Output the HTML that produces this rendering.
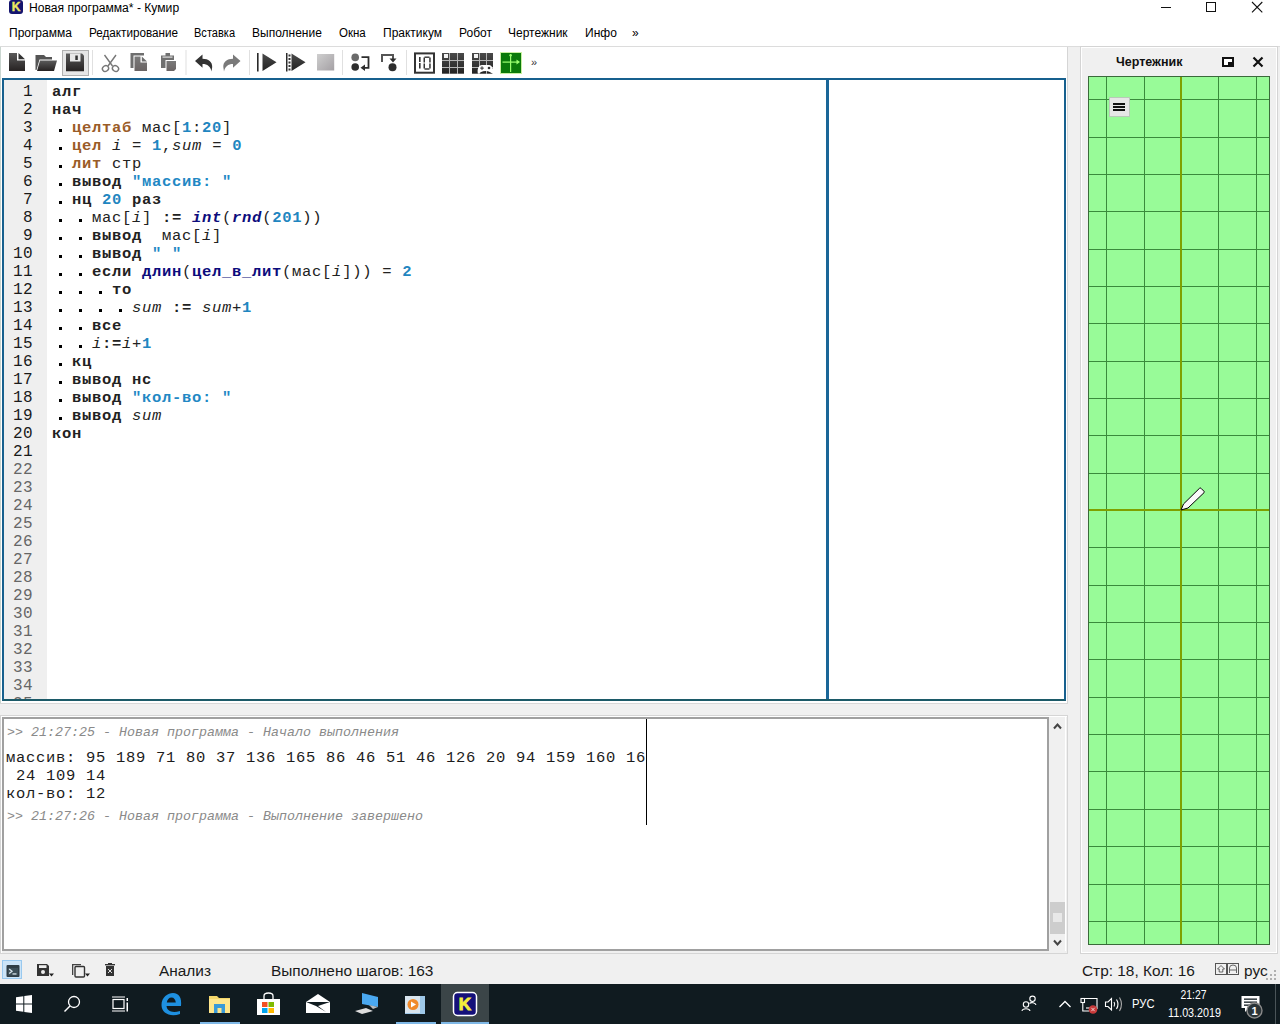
<!DOCTYPE html>
<html><head><meta charset="utf-8">
<style>
*{margin:0;padding:0;box-sizing:border-box}
html,body{width:1280px;height:1024px;overflow:hidden;background:#f0f0f0;font-family:"Liberation Sans",sans-serif;color:#000}
.a{position:absolute}
.ui{font-size:12px;line-height:14px;white-space:pre}
#top{left:0;top:0;width:1280px;height:46px;background:#fff}
#tb{left:0;top:46px;width:1068px;height:658px;background:#fff;border-top:1px solid #dcdcdc;border-right:1px solid #d5d5d5;border-bottom:1px solid #d8d8d8}
#tbr{left:1067px;top:46px;width:213px;height:1px;background:#dcdcdc}
#ed{left:2px;top:78px;width:1064px;height:623px;border:2px solid #17608e;border-bottom-color:#1c5a68;background:#fff}
#gut{left:4px;top:80px;width:43px;height:619px;background:#efefef}
#vline{left:826px;top:80px;width:3px;height:619px;background:#1a6698}
.code{font-family:"Liberation Mono",monospace;font-size:15.5px;letter-spacing:0.7px;line-height:18px;white-space:pre}
.ln{font-family:"Liberation Mono",monospace;font-size:16px;letter-spacing:0.4px;line-height:18px;white-space:pre;text-align:right}
.k{font-weight:bold}
.t{font-weight:bold;color:#9a5c28}
.n{font-weight:bold;color:#1f86c0}
.s{font-weight:bold;color:#2288c4}
.f{font-weight:bold;color:#0c0c7c}
.fi{font-weight:bold;font-style:italic;color:#0c0c7c}
.v{font-style:italic}
.d{position:absolute;width:3px;height:3px;background:#000}
#out{left:2px;top:717px;width:1047px;height:234px;border:2px solid #a0a0a0;background:#fff}
#scr{left:1049px;top:717px;width:17px;height:234px;background:#f0f0f0;border-right:1px solid #fff}
.log{font-family:"Liberation Mono",monospace;font-size:13.333px;font-style:italic;color:#8a8a8a;line-height:16px;white-space:pre}
.otx{font-family:"Liberation Mono",monospace;font-size:15.5px;letter-spacing:0.7px;line-height:18px;white-space:pre;color:#1c1c1c}
#dock{left:1080px;top:46px;width:198px;height:908px;border:1px solid #d4d4d4;box-shadow:inset 1px 1px 0 #fff,inset -1px -1px 0 #fff;background:#f0f0f0}
#task{left:0;top:984px;width:1280px;height:40px;background:#101b20}
.st{font-size:15.4px;line-height:18px;white-space:pre;color:#1a1a1a}
</style></head><body>
<div id="top" class="a"></div>
<!-- title -->
<div class="a" style="left:9px;top:0;width:14px;height:14px;background:#14146e;border-radius:3px"></div>
<div class="a" style="left:9px;top:0;width:14px;height:14px;color:#ece860;font-weight:bold;font-size:12px;line-height:14px;-webkit-text-stroke:0.4px #ece860;text-align:center">K</div>
<div class="a ui" style="left:29px;top:1px;transform:scaleX(1.01);transform-origin:0 0">Новая программа* - Кумир</div>
<svg class="a" style="left:1150px;top:0" width="130" height="16" viewBox="1150 0 130 16" shape-rendering="crispEdges">
<rect x="1161" y="7" width="10" height="1" fill="#111"/>
<rect x="1206.5" y="2.5" width="9" height="9" fill="none" stroke="#111" stroke-width="1"/>
</svg>
<svg class="a" style="left:1250px;top:0" width="16" height="16" viewBox="1250 0 16 16"><path d="M1252 2 L1262.3 12.3 M1262.3 2 L1252 12.3" stroke="#111" stroke-width="1.1"/></svg>
<!-- menu -->
<div class="a ui" style="left:9px;top:26px">Программа</div>
<div class="a ui" style="left:89px;top:26px;transform:scaleX(0.975);transform-origin:0 0">Редактирование</div>
<div class="a ui" style="left:194px;top:26px;transform:scaleX(0.92);transform-origin:0 0">Вставка</div>
<div class="a ui" style="left:252px;top:26px">Выполнение</div>
<div class="a ui" style="left:339px;top:26px;transform:scaleX(0.96);transform-origin:0 0">Окна</div>
<div class="a ui" style="left:383px;top:26px">Практикум</div>
<div class="a ui" style="left:459px;top:26px">Робот</div>
<div class="a ui" style="left:508px;top:26px">Чертежник</div>
<div class="a ui" style="left:585px;top:26px">Инфо</div>
<div class="a ui" style="left:632px;top:26px">»</div>
<div id="tb" class="a"></div>
<div id="tbr" class="a"></div>
<div class="a" style="left:0;top:47px;width:1px;height:656px;background:#cad6d0"></div>
<svg class="a" style="left:0;top:46px" width="560" height="32" viewBox="0 46 560 32">
<defs>
<linearGradient id="gd" x1="0" y1="0" x2="0" y2="1"><stop offset="0" stop-color="#5a5a5a"/><stop offset="1" stop-color="#262222"/></linearGradient>
<linearGradient id="gg" x1="0" y1="0" x2="0" y2="1"><stop offset="0" stop-color="#7a7a7a"/><stop offset="1" stop-color="#6a6464"/></linearGradient>
<linearGradient id="gs" x1="0" y1="0" x2="1" y2="1"><stop offset="0" stop-color="#cfcfcf"/><stop offset="1" stop-color="#a4a0a4"/></linearGradient>
<linearGradient id="gk" x1="0" y1="0" x2="0" y2="1"><stop offset="0" stop-color="#4a4a4a"/><stop offset="1" stop-color="#222"/></linearGradient>
</defs>
<!-- new -->
<path d="M9 53 H17 V60.5 H25 V71 H9 Z" fill="url(#gd)"/>
<path d="M18.5 53 L25 59.3 H18.5 Z" fill="#333"/>
<!-- open -->
<path d="M35.5 55 H44 L46 57 H52 V59.5 H39.5 L36.5 70 H35.5 Z" fill="#555"/>
<path d="M40 60.5 H57 L54 71 H37 Z" fill="url(#gd)"/>
<!-- save btn -->
<rect x="62.5" y="50.5" width="26" height="25" fill="#e6e6e6" stroke="#b0b0b0"/>
<path d="M66 53.5 H82 L84 55.5 V71.2 H66 Z" fill="url(#gd)"/>
<rect x="70" y="53.5" width="10.5" height="8" fill="#e8e8e8"/>
<rect x="75.3" y="55.5" width="2.5" height="4.5" fill="#333"/>
<!-- sep -->
<rect x="92" y="50" width="1" height="25" fill="#e0e0e0"/>
<!-- cut -->
<g fill="none" stroke="#777" stroke-width="1.4">
<path d="M104.5 55 L112.5 66 M116 55 L108 66"/>
<ellipse cx="105.5" cy="68.5" rx="3.2" ry="2.8" transform="rotate(-35 105.5 68.5)"/>
<ellipse cx="115.5" cy="68.5" rx="3.2" ry="2.8" transform="rotate(35 115.5 68.5)"/>
</g>
<!-- copy -->
<path d="M130.5 53 H144 V55.5 H133.5 V68 H130.5 Z" fill="#6e6e6e"/>
<path d="M134.5 56.5 H140.5 V62.5 H147 V71 H134.5 Z" fill="url(#gg)"/>
<path d="M141.8 56.5 L147 61.5 H141.8 Z" fill="#6e6e6e"/>
<!-- paste -->
<path d="M165.5 53 H170 V55.5 H174 V60 H165.5 V68 H161 V55.5 H165.5 Z" fill="#707070"/>
<rect x="162.5" y="56.5" width="10" height="1.2" fill="#ddd"/>
<path d="M166.5 61 H176 V69 L174 71 H166.5 Z" fill="url(#gg)"/>
<!-- sep -->
<rect x="185.5" y="50" width="1" height="25" fill="#e0e0e0"/>
<!-- undo -->
<path d="M195 61 L202.5 54.5 V58.8 C208.5 58.8 212.5 62 212.2 67 L211.5 71.5 C210.5 66.5 207.5 64 202.5 64 V67.8 Z" fill="#333"/>
<!-- redo -->
<path d="M240.5 61 L233 54.5 V58.8 C227 58.8 223 62 223.3 67 L224 71.5 C225 66.5 228 64 233 64 V67.8 Z" fill="#7a7a7a"/>
<!-- sep -->
<rect x="249" y="50" width="1" height="25" fill="#e0e0e0"/>
<!-- run -->
<rect x="257" y="53" width="1.6" height="18.5" fill="#2a2a2a"/>
<path d="M262.5 53.5 L276.5 62.2 L262.5 71 Z" fill="url(#gk)"/>
<!-- run step -->
<rect x="286" y="53" width="1.5" height="18.5" fill="#2a2a2a"/>
<g fill="#333"><rect x="288.5" y="54.5" width="2" height="2"/><rect x="288.5" y="58" width="2" height="2"/><rect x="288.5" y="61.5" width="2" height="2"/><rect x="288.5" y="65" width="2" height="2"/><rect x="288.5" y="68.5" width="2" height="2"/></g>
<path d="M291.5 53.5 L305.5 62.2 L291.5 71 Z" fill="url(#gk)"/>
<!-- stop -->
<rect x="317" y="54" width="17.2" height="16.5" fill="url(#gs)"/>
<!-- sep -->
<rect x="342" y="50" width="1" height="25" fill="#e0e0e0"/>
<!-- step over -->
<circle cx="355.2" cy="57.4" r="3.8" fill="#6a6a6a"/>
<circle cx="355.2" cy="67" r="3.8" fill="#2d2d2d"/>
<path d="M361.5 57.2 H368.5 V67.8 H364" fill="none" stroke="#2d2d2d" stroke-width="1.8"/>
<path d="M360.5 67.8 L365 64.5 V71 Z" fill="#2d2d2d"/>
<!-- step in -->
<path d="M382 62 V55 H393 V59" fill="none" stroke="#555" stroke-width="2"/>
<path d="M389.5 58.5 H396.5 L393 62.5 Z" fill="#2d2d2d"/>
<circle cx="392.5" cy="67.2" r="4" fill="#2d2d2d"/>
<!-- sep -->
<rect x="406" y="50" width="1" height="25" fill="#e0e0e0"/>
<!-- 10 -->
<rect x="415" y="53.4" width="19" height="19.3" fill="#fff" stroke="#333" stroke-width="2"/>
<g fill="#333"><rect x="419" y="57" width="1.6" height="5"/><rect x="419" y="63" width="1.6" height="5.5"/>
<rect x="424.5" y="56.5" width="5" height="1.4"/><rect x="424.5" y="68.3" width="5" height="1.4"/>
<rect x="423.5" y="57.5" width="1.5" height="5"/><rect x="423.5" y="63.5" width="1.5" height="5"/>
<rect x="429.2" y="57.5" width="1.5" height="5"/><rect x="429.2" y="63.5" width="1.5" height="5"/></g>
<!-- robot grid -->
<rect x="442" y="53" width="22" height="20.7" fill="url(#gk)"/>
<g fill="#b4b4b4" shape-rendering="crispEdges"><rect x="449" y="53" width="1" height="21"/><rect x="457" y="53" width="1" height="21"/><rect x="442" y="60" width="22" height="1"/><rect x="442" y="67" width="22" height="1"/></g>
<rect x="444" y="54" width="4" height="4" fill="#f4f4f4" shape-rendering="crispEdges"/>
<!-- robot game -->
<rect x="472" y="53" width="21" height="20.7" fill="url(#gk)"/>
<g fill="#b4b4b4" shape-rendering="crispEdges"><rect x="479" y="53" width="1" height="21"/><rect x="486" y="53" width="1" height="21"/><rect x="472" y="60" width="21" height="1"/><rect x="472" y="67" width="21" height="1"/></g>
<rect x="474" y="54" width="4" height="4" fill="#f4f4f4" shape-rendering="crispEdges"/>
<path d="M478 74 C477 70 478 65.5 482 65 H489 C492.5 65.5 494 70 493 74 C491 72.5 489 71 485.5 71 C482 71 480 72.5 478 74 Z" fill="#fff"/>
<g fill="#333"><rect x="480.2" y="67.6" width="3.6" height="1"/><rect x="481.5" y="66.3" width="1" height="3.6"/><circle cx="489" cy="68" r="1.3"/></g>
<!-- drawer -->
<rect x="501" y="53" width="20" height="20" fill="#0a7a0a"/>
<rect x="500.5" y="52.5" width="21" height="21" fill="none" stroke="#c8f0a0" stroke-width="1"/>
<g fill="#9aff70"><rect x="510" y="54.5" width="1.2" height="17.5"/><rect x="502.5" y="61.5" width="16" height="1.2"/>
<path d="M520 62.1 L516.5 59.6 V64.6 Z"/><circle cx="510.6" cy="55.2" r="1.2"/></g>
<!-- >> -->
<text x="531" y="66" font-family="Liberation Sans" font-size="11" fill="#333">»</text>
</svg>
<!-- TOOLBAR -->

<!-- editor -->
<div id="ed" class="a"></div>
<div id="gut" class="a"></div>
<div id="vline" class="a"></div>
<div class="a" style="left:4px;top:80px;width:43px;height:619px;overflow:hidden"><div class="a ln" style="left:0;top:3px;width:29px;color:#1a1a1a">1
2
3
4
5
6
7
8
9
10
11
12
13
14
15
16
17
18
19
20
21</div><div class="a ln" style="left:0;top:381px;width:29px;color:#666666">22
23
24
25
26
27
28
29
30
31
32
33
34
35</div></div>

<div class="a code" style="left:52px;top:83px;color:#222"><span class="k">алг</span>
<span class="k">нач</span>
  <span class="t">целтаб</span> мас[<span class="n">1</span>:<span class="n">20</span>]
  <span class="t">цел</span> <span class="v">i</span> = <span class="n">1</span>,<span class="v">sum</span> = <span class="n">0</span>
  <span class="t">лит</span> стр
  <span class="k">вывод</span> <span class="s">"массив: "</span>
  <span class="k">нц</span> <span class="n">20</span> <span class="k">раз</span>
    мас[<span class="v">i</span>] <span class="k">:=</span> <span class="fi">int</span>(<span class="fi">rnd</span>(<span class="n">201</span>))
    <span class="k">вывод</span>  мас[<span class="v">i</span>]
    <span class="k">вывод</span> <span class="s">" "</span>
    <span class="k">если</span> <span class="f">длин</span>(<span class="f">цел_в_лит</span>(мас[<span class="v">i</span>])) = <span class="n">2</span>
      <span class="k">то</span>
        <span class="v">sum</span> <span class="k">:=</span> <span class="v">sum</span>+<span class="n">1</span>
    <span class="k">все</span>
    <span class="v">i</span><span class="k">:=</span><span class="v">i</span>+<span class="n">1</span>
  <span class="k">кц</span>
  <span class="k">вывод</span> <span class="k">нс</span>
  <span class="k">вывод</span> <span class="s">"кол-во: "</span>
  <span class="k">вывод</span> <span class="v">sum</span>
<span class="k">кон</span></div>
<div class="d" style="left:59px;top:129px"></div><div class="d" style="left:59px;top:147px"></div><div class="d" style="left:59px;top:165px"></div><div class="d" style="left:59px;top:183px"></div><div class="d" style="left:59px;top:201px"></div><div class="d" style="left:59px;top:219px"></div><div class="d" style="left:79px;top:219px"></div><div class="d" style="left:59px;top:237px"></div><div class="d" style="left:79px;top:237px"></div><div class="d" style="left:59px;top:255px"></div><div class="d" style="left:79px;top:255px"></div><div class="d" style="left:59px;top:273px"></div><div class="d" style="left:79px;top:273px"></div><div class="d" style="left:59px;top:291px"></div><div class="d" style="left:79px;top:291px"></div><div class="d" style="left:99px;top:291px"></div><div class="d" style="left:59px;top:309px"></div><div class="d" style="left:79px;top:309px"></div><div class="d" style="left:99px;top:309px"></div><div class="d" style="left:119px;top:309px"></div><div class="d" style="left:59px;top:327px"></div><div class="d" style="left:79px;top:327px"></div><div class="d" style="left:59px;top:345px"></div><div class="d" style="left:79px;top:345px"></div><div class="d" style="left:59px;top:363px"></div><div class="d" style="left:59px;top:381px"></div><div class="d" style="left:59px;top:399px"></div><div class="d" style="left:59px;top:417px"></div>


<!-- output -->
<div id="out" class="a"></div>
<div class="a" style="left:0;top:715px;width:1068px;height:239px;border:1px solid #d5d5d5;box-shadow:inset 1px 1px 0 #fff"></div>
<div id="scr" class="a"></div>
<svg class="a" style="left:1049px;top:719px" width="18" height="232" viewBox="1049 719 18 232">
<path d="M1054 728.5 L1057.5 724.5 L1061 728.5" fill="none" stroke="#444" stroke-width="2"/>
<rect x="1050" y="902" width="15" height="32" fill="#cdcdcd"/>
<rect x="1053" y="913" width="9" height="9" fill="#e8e8e8"/>
<path d="M1054 940.5 L1057.5 944.5 L1061 940.5" fill="none" stroke="#444" stroke-width="2"/>
</svg>
<div class="a" style="left:646px;top:719px;width:1px;height:106px;background:#000"></div>
<div class="a log" style="left:7px;top:725px">&gt;&gt; 21:27:25 - Новая программа - Начало выполнения</div>
<div class="a otx" style="left:6px;top:749px">массив: 95 189 71 80 37 136 165 86 46 51 46 126 20 94 159 160 16
 24 109 14
кол-во: 12</div>
<div class="a log" style="left:7px;top:809px">&gt;&gt; 21:27:26 - Новая программа - Выполнение завершено</div>
<!-- OUTPUT -->

<!-- dock -->
<div id="dock" class="a"></div>
<svg class="a" style="left:1088px;top:76px" width="182" height="869" viewBox="1088 76 182 869" shape-rendering="crispEdges"><rect x="1088" y="76" width="182" height="869" fill="#98fb98"/><rect x="1088" y="99" width="182" height="1" fill="#3a8a3c"/><rect x="1088" y="137" width="182" height="1" fill="#3a8a3c"/><rect x="1088" y="174" width="182" height="1" fill="#3a8a3c"/><rect x="1088" y="211" width="182" height="1" fill="#3a8a3c"/><rect x="1088" y="249" width="182" height="1" fill="#3a8a3c"/><rect x="1088" y="286" width="182" height="1" fill="#3a8a3c"/><rect x="1088" y="323" width="182" height="1" fill="#3a8a3c"/><rect x="1088" y="361" width="182" height="1" fill="#3a8a3c"/><rect x="1088" y="398" width="182" height="1" fill="#3a8a3c"/><rect x="1088" y="435" width="182" height="1" fill="#3a8a3c"/><rect x="1088" y="473" width="182" height="1" fill="#3a8a3c"/><rect x="1088" y="547" width="182" height="1" fill="#3a8a3c"/><rect x="1088" y="585" width="182" height="1" fill="#3a8a3c"/><rect x="1088" y="622" width="182" height="1" fill="#3a8a3c"/><rect x="1088" y="659" width="182" height="1" fill="#3a8a3c"/><rect x="1088" y="697" width="182" height="1" fill="#3a8a3c"/><rect x="1088" y="734" width="182" height="1" fill="#3a8a3c"/><rect x="1088" y="771" width="182" height="1" fill="#3a8a3c"/><rect x="1088" y="809" width="182" height="1" fill="#3a8a3c"/><rect x="1088" y="846" width="182" height="1" fill="#3a8a3c"/><rect x="1088" y="884" width="182" height="1" fill="#3a8a3c"/><rect x="1088" y="921" width="182" height="1" fill="#3a8a3c"/><rect x="1106" y="76" width="1" height="869" fill="#3a8a3c"/><rect x="1144" y="76" width="1" height="869" fill="#3a8a3c"/><rect x="1218" y="76" width="1" height="869" fill="#3a8a3c"/><rect x="1256" y="76" width="1" height="869" fill="#3a8a3c"/><rect x="1088" y="509" width="182" height="2" fill="#7fa000"/><rect x="1180" y="76" width="2" height="869" fill="#7fa000"/><rect x="1088.5" y="76.5" width="181" height="868" fill="none" stroke="#3a6a3a" stroke-width="1"/></svg><svg class="a" style="left:1176px;top:484px" width="34" height="30" viewBox="0 0 34 30"><path d="M5 26 L7.5 20 L23.5 4.3 Q24.3 3.6 25 4.3 L28 7.3 Q28.7 8 28 8.7 L12 24 Z" fill="#fafafa" stroke="#000" stroke-width="1" stroke-linejoin="round"/></svg><div class="a" style="left:1109px;top:97px;width:21px;height:20px;background:#e6e6e6;border:1px solid #b9c9b9"></div><div class="a" style="left:1113px;top:103px;width:12px;height:2px;background:#111"></div><div class="a" style="left:1113px;top:106px;width:12px;height:2px;background:#111"></div><div class="a" style="left:1113px;top:109px;width:12px;height:2px;background:#111"></div><div class="a" style="left:1116px;top:55px;font-weight:bold;font-size:12.5px;line-height:14px;white-space:pre;color:#111">Чертежник</div><div class="a" style="left:1222px;top:57px;width:12px;height:10px;border:2px solid #111;background:#fff"></div><div class="a" style="left:1228px;top:62px;width:6px;height:5px;background:#111"></div><svg class="a" style="left:1252px;top:56px" width="12" height="12" viewBox="0 0 12 12"><path d="M1.5 1.5 L10.5 10.5 M10.5 1.5 L1.5 10.5" stroke="#111" stroke-width="2.2"/></svg>
<!-- DOCK -->

<!-- status -->
<div class="a" style="left:2px;top:960px;width:20px;height:19px;background:#cce4f7;border:1px solid #99c9ef"></div>
<svg class="a" style="left:0;top:955px" width="130" height="28" viewBox="0 955 130 28">
<rect x="6.5" y="965" width="13" height="12" rx="1" fill="#2f3d45"/>
<rect x="8" y="968" width="10" height="7.5" fill="#3d4f58"/>
<path d="M9.2 969 L12 971.2 L9.2 973.4" fill="none" stroke="#d8e4ea" stroke-width="1.3"/>
<rect x="12.5" y="973.3" width="4" height="1.3" fill="#d8e4ea"/>
<!-- save -->
<path d="M37 964 H47 L49 966 V976 H37 Z" fill="#333"/>
<rect x="39" y="965.2" width="7.5" height="2.8" fill="#eee"/>
<circle cx="43" cy="972" r="2" fill="#eee"/>
<path d="M49 973.5 H54 L51.5 976.5 Z" fill="#222"/>
<!-- copy -->
<path d="M72 964 H81 V965.3 H73.3 V975 H72 Z" fill="#444"/>
<rect x="75" y="966.5" width="9.5" height="10.5" fill="none" stroke="#333" stroke-width="1.4" rx="1"/>
<path d="M85 973.5 H90 L87.5 976.5 Z" fill="#222"/>
<!-- trash -->
<rect x="105" y="964" width="10" height="1.4" fill="#333"/>
<rect x="108" y="963" width="4" height="1.4" fill="#333"/>
<path d="M106 966 H114 V976 H106 Z" fill="#333"/>
<path d="M108 969 L112 973 M112 969 L108 973" stroke="#ddd" stroke-width="1"/>
</svg>
<div class="a st" style="left:159px;top:962px">Анализ</div>
<div class="a st" style="left:271px;top:962px">Выполнено шагов: 163</div>
<div class="a st" style="left:1082px;top:962px">Стр: 18, Кол: 16</div>
<svg class="a" style="left:1214px;top:962px" width="28" height="15" viewBox="0 0 28 15">
<rect x="1.5" y="1.5" width="11" height="11" fill="none" stroke="#555" stroke-width="1"/>
<rect x="13.5" y="1.5" width="11" height="11" fill="none" stroke="#555" stroke-width="1"/>
<path d="M7 3.5 L10.5 7 H8.8 V10 H5.2 V7 H3.5 Z" fill="none" stroke="#555" stroke-width="0.9"/>
<path d="M15.5 11 V6 Q15.5 3 19 3 Q22.5 3 22.5 6 V11 M15.5 8 H22.5" fill="none" stroke="#555" stroke-width="0.9"/>
</svg>
<div class="a st" style="left:1244px;top:962px">рус</div>
<svg class="a" style="left:1266px;top:970px" width="12" height="12" viewBox="0 0 12 12"><g fill="#b0b0b0"><rect x="8" y="0" width="2" height="2"/><rect x="4" y="4" width="2" height="2"/><rect x="8" y="4" width="2" height="2"/><rect x="0" y="8" width="2" height="2"/><rect x="4" y="8" width="2" height="2"/><rect x="8" y="8" width="2" height="2"/></g></svg>

<!-- STATUS -->
<div id="task" class="a"></div>
<svg class="a" style="left:0;top:984px" width="1280" height="40" viewBox="0 984 1280 40">
<!-- start -->
<g fill="#fff"><path d="M16 997.3 L23.3 996.3 V1003.5 H16 Z"/><path d="M24.3 996.1 L32 995 V1003.5 H24.3 Z"/><path d="M16 1004.5 H23.3 V1011.7 L16 1010.7 Z"/><path d="M24.3 1004.5 H32 V1013 L24.3 1011.9 Z"/></g>
<!-- search -->
<circle cx="74" cy="1002" r="5.5" fill="none" stroke="#fff" stroke-width="1.3"/>
<path d="M70 1006 L64.5 1011.5" stroke="#fff" stroke-width="1.4"/>
<!-- task view -->
<g fill="none" stroke="#fff" stroke-width="1.2"><rect x="113" y="999.5" width="11" height="9"/><path d="M112 997 H125 M112 1011 H125"/></g>
<g fill="#fff"><rect x="126.5" y="998" width="1.5" height="3"/><rect x="126.5" y="1002.5" width="1.5" height="9"/></g>
<!-- edge -->
<path d="M181 1006 H166.5 C167 1011 172 1013.5 180 1011 V1014 C170 1017.5 161.5 1013 161.5 1005 C161.5 997 168 993 173 993 C179 993 182 998 181 1006 Z M166.8 1002.5 H175.8 C175.5 999.5 174 997.5 171.5 997.5 C169 997.5 167.2 999.5 166.8 1002.5 Z" fill="#1e90e0"/>
<!-- explorer -->
<path d="M209 996 H217 L219 998 H230 V1013 H209 Z" fill="#f4d76a"/>
<rect x="209" y="999" width="21" height="14" fill="#ffe68c"/>
<path d="M214 1004 H225 V1013 H221.5 V1008 H217.5 V1013 H214 Z" fill="#3a9ad8"/>
<rect x="200" y="1022" width="40" height="2" fill="#7fb8e6"/>
<!-- store -->
<path d="M257 999 H280 V1015 H257 Z" fill="#fff"/>
<path d="M264 999 V996 C264 992 273 992 273 996 V999" fill="none" stroke="#fff" stroke-width="1.3"/>
<rect x="262" y="1002" width="5.5" height="5" fill="#f25022"/><rect x="268.5" y="1002" width="5.5" height="5" fill="#7fba00"/>
<rect x="262" y="1008" width="5.5" height="5" fill="#00a4ef"/><rect x="268.5" y="1008" width="5.5" height="5" fill="#ffb900"/>
<!-- mail -->
<path d="M306 1002 L318 994 L330 1002 V1013 H306 Z" fill="#fff"/>
<path d="M306 1002 L330 1002 L318 1006 L326 1012 L316 1006 Z" fill="#101b20"/>
<path d="M306 1002.5 H330 L318 1008 Z" fill="#fff" opacity="0"/>
<!-- pc -->
<path d="M362 993 L378 997 V1007 L362 1004 Z" fill="#4aa8f0"/>
<path d="M355 1011 L366 1008 L373 1011 L362 1014 Z" fill="#ddd"/>
<path d="M369 1005 L378 1007 L373 1009 Z" fill="#bbb"/>
<!-- video -->
<rect x="405" y="996" width="20" height="18" fill="#9ec8e8"/>
<rect x="405" y="996" width="15" height="17" fill="#d9e5ee"/>
<circle cx="413" cy="1004.5" r="5.5" fill="#f08a2a"/>
<path d="M411 1001.5 L416 1004.5 L411 1007.5 Z" fill="#fff"/>
<rect x="396" y="1022" width="40" height="2" fill="#7fb8e6"/>
<!-- kumir active -->
<rect x="441" y="984" width="48" height="40" fill="#3b4548"/>
<rect x="441" y="1022" width="48" height="2" fill="#7fb8e6"/>
<rect x="453.5" y="992.5" width="23" height="23" rx="4" fill="#14107a" stroke="#fff" stroke-width="1.5"/>
<text x="465" y="1010" font-family="Liberation Sans" font-weight="bold" font-size="17" fill="#f4ec3c" stroke="#f4ec3c" stroke-width="0.9" text-anchor="middle">K</text>
<!-- tray -->
<g fill="none" stroke="#fff" stroke-width="1.1"><circle cx="1026" cy="1004.5" r="2.7"/><circle cx="1032.5" cy="998.8" r="2.7"/>
<path d="M1022 1011 C1022.5 1008 1029.5 1008 1030 1011"/><path d="M1029.5 1003.5 C1031 1002 1035.5 1002.5 1036 1005"/></g>
<path d="M1059.5 1007 L1065 1001.5 L1070.5 1007" fill="none" stroke="#fff" stroke-width="1.3"/>
<g fill="none" stroke="#fff" stroke-width="1.1"><path d="M1084.5 998.5 H1097 V1009"/><rect x="1081" y="998.5" width="3.5" height="4"/><path d="M1082.8 1002.5 V1011 H1089"/><path d="M1086 1008 H1090"/></g>
<circle cx="1093" cy="1009.5" r="4.3" fill="#c83a3a"/><path d="M1091.3 1007.8 L1094.7 1011.2 M1094.7 1007.8 L1091.3 1011.2" stroke="#f0d0d0" stroke-width="1"/>
<g fill="none" stroke="#fff" stroke-width="1.1"><path d="M1105.5 1002 H1108 L1111.5 998.5 V1010 L1108 1006.5 H1105.5 Z"/><path d="M1114 1002 Q1115.5 1004.2 1114 1006.5 M1116.5 999.5 Q1119.5 1004.2 1116.5 1009"/><path d="M1119.5 997.5 Q1123.5 1004.2 1119.5 1011" stroke="#aaa"/></g>
<text x="1132" y="1007.5" font-family="Liberation Sans" font-size="12" fill="#fff" textLength="22.5" lengthAdjust="spacingAndGlyphs">РУС</text>
<text x="1180.5" y="999.3" font-family="Liberation Sans" font-size="12" fill="#fff" textLength="26" lengthAdjust="spacingAndGlyphs">21:27</text>
<text x="1168" y="1016.8" font-family="Liberation Sans" font-size="12" fill="#fff" textLength="53" lengthAdjust="spacingAndGlyphs">11.03.2019</text>
<path d="M1241.5 996 H1259.5 V1008 H1249 L1245 1012 V1008 H1241.5 Z" fill="#fff"/>
<g fill="#101b20"><rect x="1244" y="998.5" width="13" height="1.3"/><rect x="1244" y="1001.5" width="13" height="1.3"/><rect x="1244" y="1004.5" width="9" height="1.3"/></g>
<circle cx="1254.5" cy="1010.5" r="7.5" fill="#2a3438" stroke="#8a8a8a" stroke-width="1.4"/>
<text x="1254.5" y="1014.5" font-family="Liberation Sans" font-weight="bold" font-size="11" fill="#fff" text-anchor="middle">1</text>
<rect x="1275" y="984" width="1" height="40" fill="#4a5458"/>
</svg>
<!-- TASKBAR -->
</body></html>
